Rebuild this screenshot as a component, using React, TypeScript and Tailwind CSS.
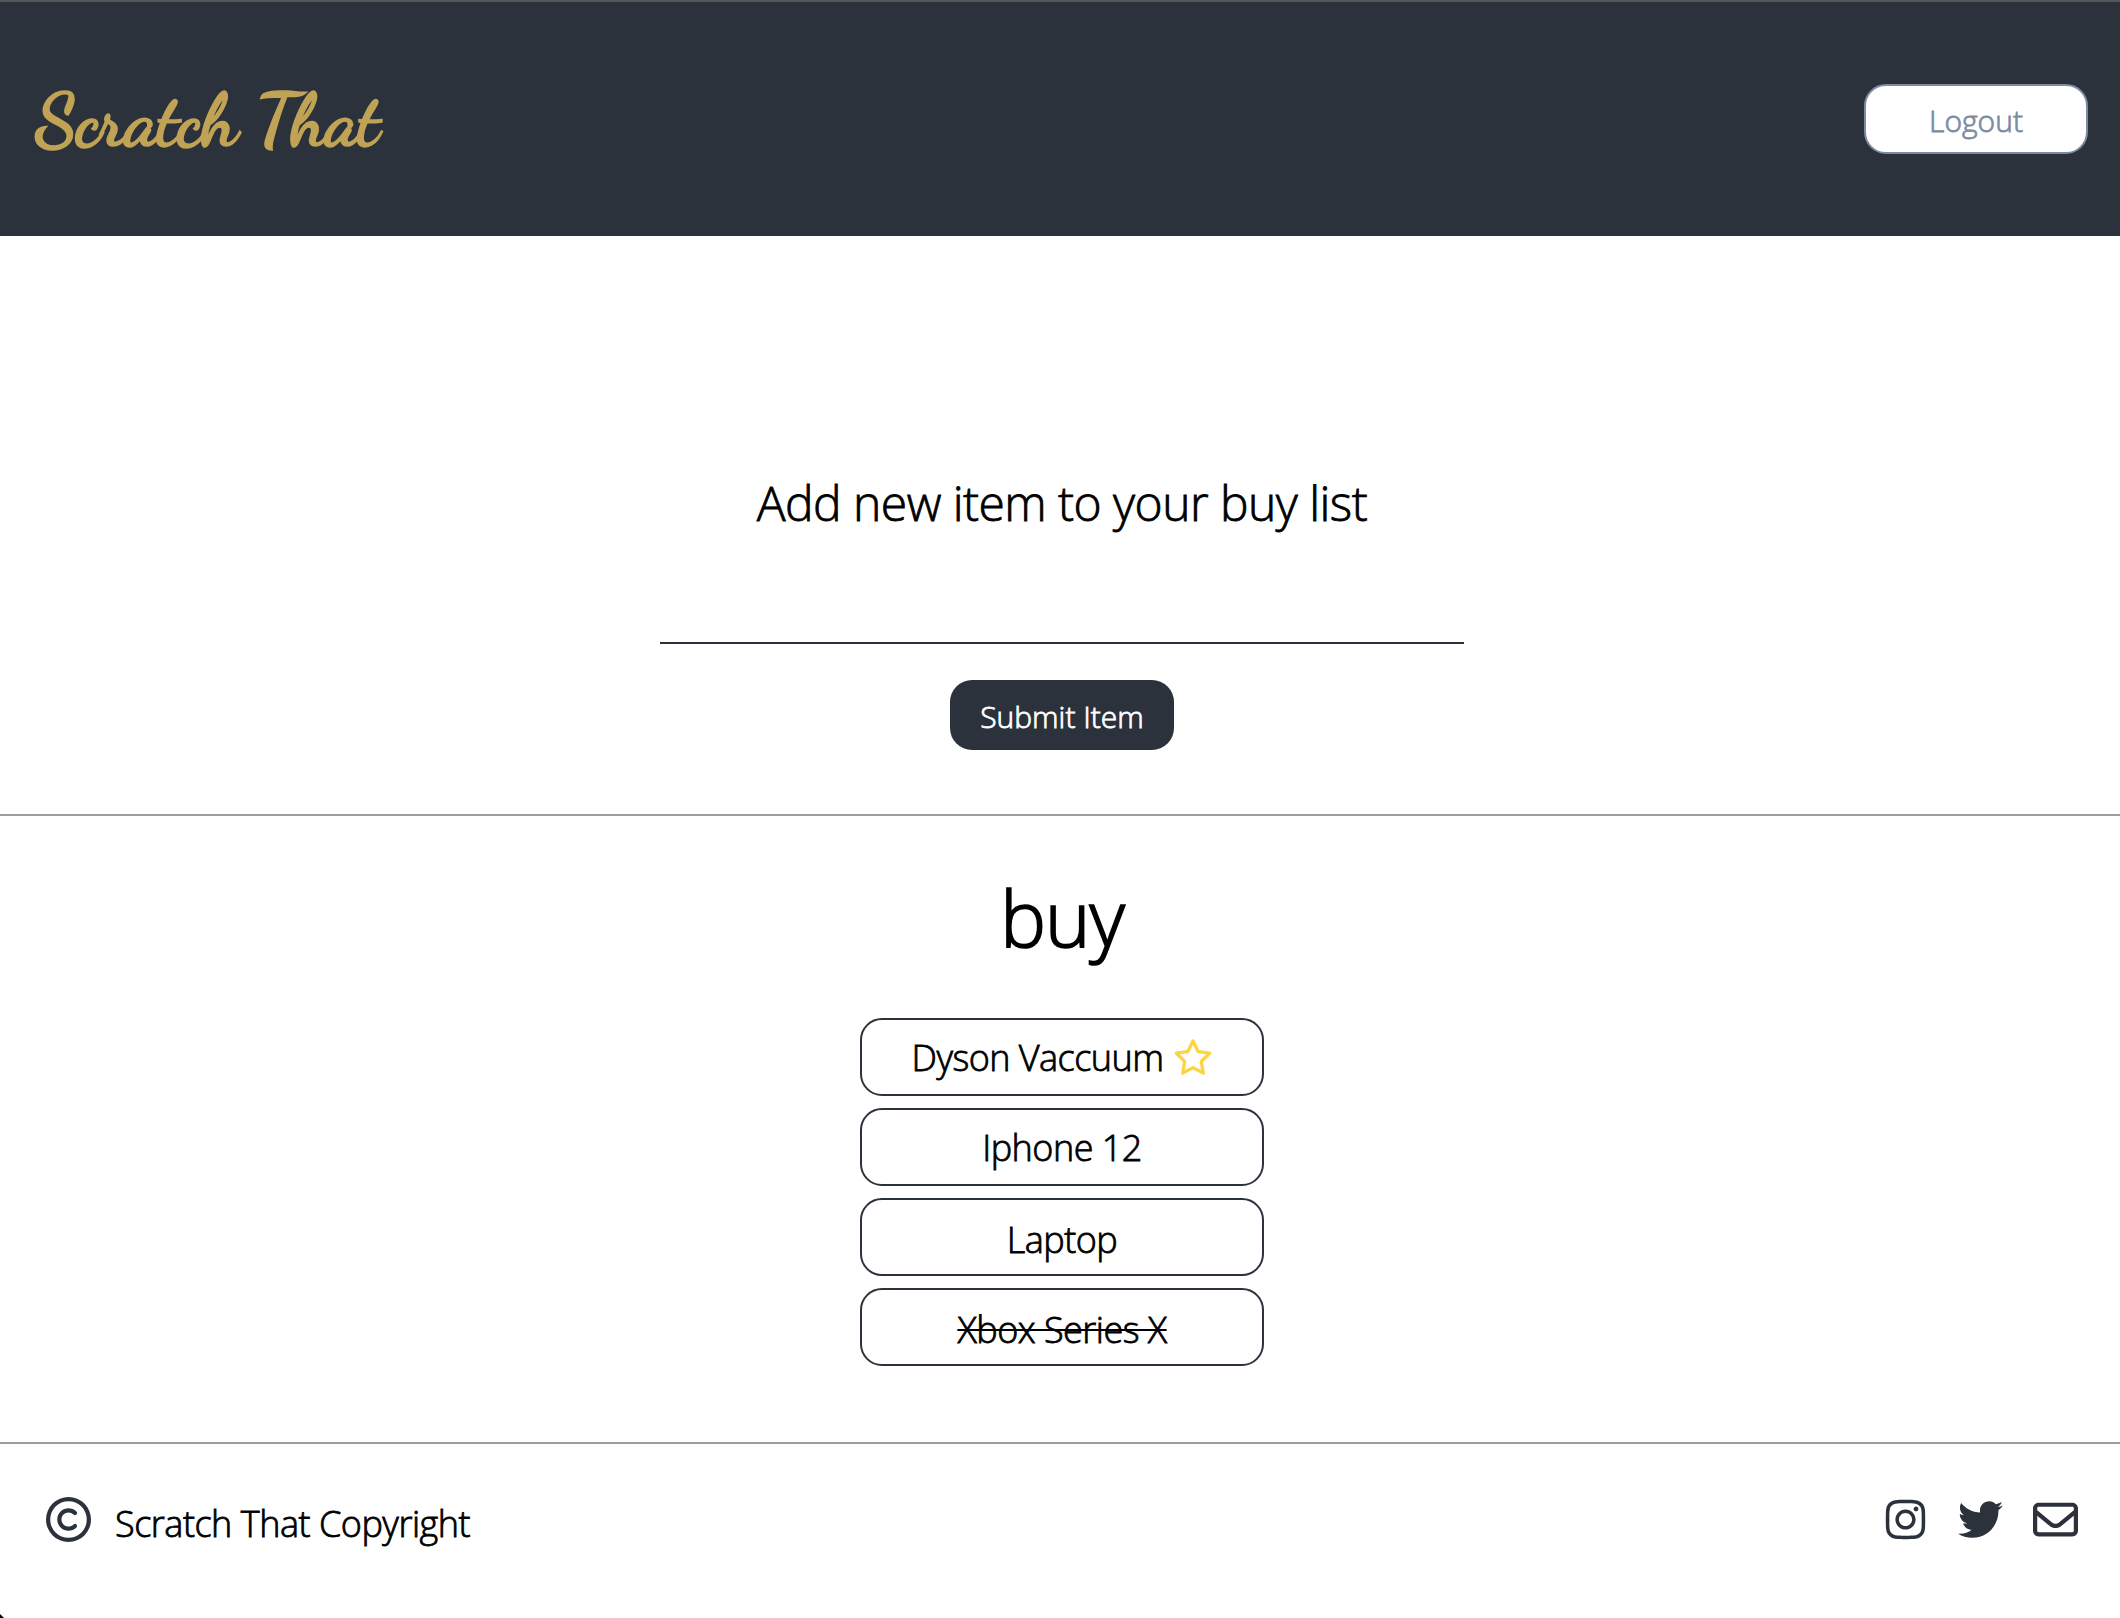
import { FaInstagram, FaRegCopyright, FaRegEnvelope, FaRegStar, FaTwitter } from "react-icons/fa6";

type Item = { name: string; starred?: boolean; done?: boolean };

const items: Item[] = [
  { name: "Dyson Vaccuum", starred: true },
  { name: "Iphone 12" },
  { name: "Laptop" },
  { name: "Xbox Series X", done: true },
];

function Header() {
  return (
    <header className="flex h-[236px] items-start justify-between border-t-2 border-[#565656] bg-[#2c323c] pr-8 pl-[35px]">
      <h1 className="mt-[74px] w-[350px] whitespace-nowrap font-['Dancing_Script',cursive] text-[74px] leading-[90px] font-bold tracking-[-1px] text-[#c0a355] [-webkit-text-stroke:1.5px_currentColor]">
        Scratch That
      </h1>
      <button className="mt-[82px] h-[70px] w-56 rounded-[22px] border-2 border-[#7c8ba3] bg-white pt-[3px] text-[30px] leading-[40px] text-[#7c8ba3]">
        Logout
      </button>
    </header>
  );
}

function AddItem() {
  return (
    <section className="flex h-[580px] flex-col items-center border-b-2 border-[#9a9ea3] pl-1">
      <h2 className="mt-[234px] text-[48px] leading-[66px] tracking-[-0.55px]">Add new item to your buy list</h2>
      <input
        aria-label="New item"
        className="mt-[44px] h-16 w-[804px] border-b-2 border-[#2c323c] bg-transparent text-4xl outline-none"
      />
      <button className="mt-9 h-[70px] w-56 rounded-[22px] bg-[#2c323c] pt-[3px] text-[30px] leading-[40px] text-white">
        Submit Item
      </button>
    </section>
  );
}

function BuyList() {
  return (
    <section className="flex h-[628px] flex-col items-center border-b-2 border-[#9a9ea3] pl-1">
      <h2 className="mt-[47px] text-[77px] leading-[110px] tracking-[-1px] [-webkit-text-stroke:1.7px_currentColor]">
        buy
      </h2>
      <ul className="mt-[45px] flex flex-col gap-3">
        {items.map((item, index) => (
          <li
            key={item.name}
            className={`flex h-[78px] w-[404px] items-center justify-center gap-[9px] rounded-[22px] border-2 border-[#2c323c] text-[36px] leading-[50px] tracking-[-0.52px] ${index > 1 ? "pt-[5px]" : "pt-px"}`}
          >
            <span className={item.done ? "line-through decoration-2" : ""}>{item.name}</span>
            {item.starred && <FaRegStar className="mb-0.5 h-9 w-[40px] text-[#fcd545]" />}
          </li>
        ))}
      </ul>
    </section>
  );
}

function Footer() {
  return (
    <footer className="flex h-[174px] items-start justify-between pr-[42px] pl-[46px]">
      <div className="flex items-start gap-6">
        <FaRegCopyright className="mt-[53px] size-[45px] text-[#2c323c]" />
        <span className="mt-[55px] text-[36px] leading-[50px] tracking-[-0.48px]">Scratch That Copyright</span>
      </div>
      <div className="mt-[53px] flex items-start gap-[30px] text-[45px] text-[#2c323c]">
        <FaInstagram />
        <FaTwitter />
        <FaRegEnvelope />
      </div>
    </footer>
  );
}

export default function App() {
  return (
    <div className="relative h-[1618px] w-[2120px] overflow-hidden bg-white font-['Open_Sans',sans-serif] font-light text-black [-webkit-text-stroke:0.8px_currentColor]">
      <Header />
      <AddItem />
      <BuyList />
      <Footer />
      <svg className="absolute bottom-0 left-0 size-1" viewBox="0 0 4 4">
        <path d="M0 0 4 4H0Z" />
      </svg>
    </div>
  );
}
